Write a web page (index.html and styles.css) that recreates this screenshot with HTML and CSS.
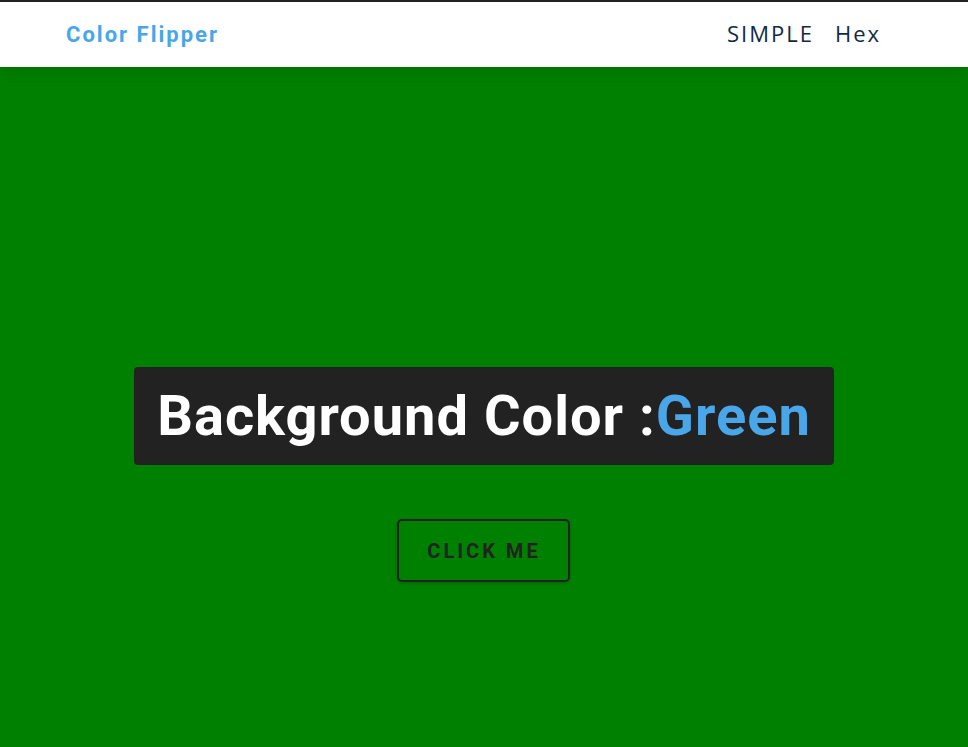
FILE: index.html
```html
<!DOCTYPE html>
<html lang="en">
<head>
<meta charset="utf-8">
<title>Color Flipper</title>
<link rel="stylesheet" href="styles.css">
</head>
<body>
<nav class="nav">
  <div class="nav-center">
    <h4 class="brand">Color Flipper</h4>
    <ul class="nav-links">
      <li><a href="#">SIMPLE</a></li>
      <li><a href="#">Hex</a></li>
    </ul>
  </div>
</nav>
<main class="main">
  <div class="container">
    <h2 class="title">Background Color :<span class="color">Green</span></h2>
    <button class="btn-hero">Click Me</button>
  </div>
</main>
</body>
</html>
```
FILE: styles.css
```css
* { box-sizing: border-box; }
html, body { margin: 0; padding: 0; }
body {
  background: #008000;
  border-top: 2px solid #222;
  height: 747px;
  overflow: hidden;
  display: flex;
  flex-direction: column;
  font-family: Roboto, "Liberation Sans", sans-serif;
}
.nav {
  background: #fff;
  height: 65px;
  box-shadow: 0 5px 15px rgba(0, 0, 0, 0.12);
  position: relative;
  z-index: 1;
  flex: none;
}
.nav-center {
  height: 100%;
  display: flex;
  align-items: center;
  justify-content: space-between;
  padding: 0 87px 0 66px;
}
.brand {
  margin: 0;
  font-family: Roboto, sans-serif;
  font-weight: 700;
  font-size: 22px;
  letter-spacing: 2px;
  color: #49a6e9;
}
.nav-links {
  display: flex;
  gap: 21px;
  list-style: none;
  margin: 0 0 4px;
  padding: 0;
}
.nav-links a {
  font-family: "Open Sans", sans-serif;
  font-size: 22px;
  letter-spacing: 2px;
  color: #102a42;
  text-decoration: none;
}
.main {
  flex: 1;
  display: flex;
  justify-content: center;
  padding-top: 300px;
}
.container {
  display: flex;
  flex-direction: column;
  align-items: center;
  gap: 54px;
}
.title {
  margin: 0;
  width: 700px;
  height: 98px;
  display: flex;
  align-items: center;
  justify-content: center;
  background: #222;
  color: #fff;
  border-radius: 4px;
  font-family: Roboto, sans-serif;
  font-weight: 700;
  font-size: 56px;
  letter-spacing: 1px;
}
.color { color: #49a6e9; }
.btn-hero {
  width: 173px;
  height: 63px;
  background: transparent;
  border: 2px solid #222;
  border-radius: 5px;
  box-shadow: 0 1px 3px rgba(0, 0, 0, 0.25);
  color: #222;
  font-family: Roboto, sans-serif;
  font-weight: 700;
  font-size: 20px;
  letter-spacing: 3px;
  text-transform: uppercase;
  cursor: pointer;
  padding: 0 0 0 2px;
  margin-right: 2px;
}
```
